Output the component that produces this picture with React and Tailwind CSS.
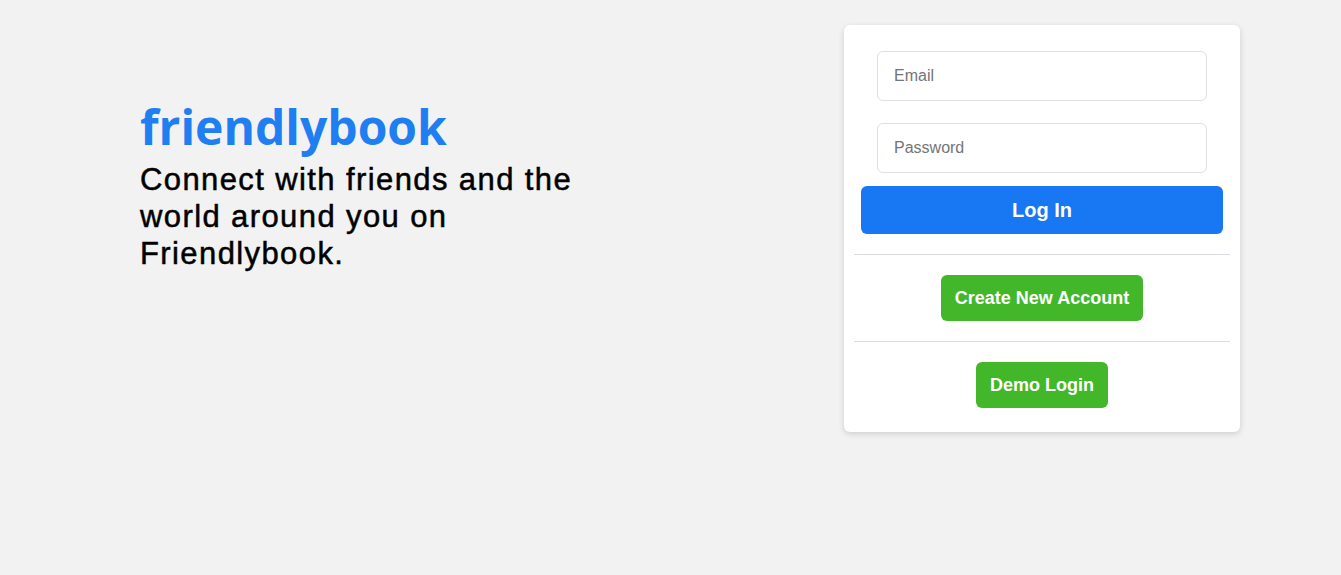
export default function App() {
  return (
    <div className="min-h-screen w-full bg-[#f2f2f2] font-['Liberation_Sans',Arial,sans-serif]">
      <div className="flex items-start justify-between pl-[140px] pr-[101px] pt-[25px]">
        <div className="mt-[72px] w-[480px]">
          <h1 className="font-['Open_Sans',sans-serif] text-[48px] font-bold leading-[60px] text-[#1f7ff0]">
            friendlybook
          </h1>
          <p className="mt-[4px] text-[31px] leading-[37px] tracking-[1.4px] text-black [-webkit-text-stroke:0.5px_black]">
            Connect with friends and the world around you on Friendlybook.
          </p>
        </div>

        <div className="w-[396px] rounded-md bg-white px-[10px] pt-[26px] pb-[24px] shadow-[0_2px_6px_rgba(0,0,0,0.15)]">
          <form className="flex flex-col px-[7px]" onSubmit={(e) => e.preventDefault()}>
            <input
              type="email"
              placeholder="Email"
              className="mx-[16px] h-[50px] rounded-md border border-[#dddfe2] px-[16px] text-[16px] text-black outline-none placeholder:text-[#757575]"
            />
            <input
              type="password"
              placeholder="Password"
              className="mx-[16px] mt-[22px] h-[50px] rounded-md border border-[#dddfe2] px-[16px] text-[16px] text-black outline-none placeholder:text-[#757575]"
            />
            <button className="mt-[13px] h-[48px] rounded-md bg-[#1877f2] text-[20px] font-bold text-white">
              Log In
            </button>
          </form>

          <div className="mt-[20px] border-t border-[#dadde1]" />
          <div className="flex justify-center pt-[20px] pb-[20px]">
            <button className="h-[46px] w-[202px] rounded-md bg-[#42b72a] text-[18px] font-bold text-white">
              Create New Account
            </button>
          </div>
          <div className="border-t border-[#dadde1]" />
          <div className="flex justify-center pt-[20px]">
            <button className="h-[46px] w-[132px] rounded-md bg-[#42b72a] text-[18px] font-bold text-white">
              Demo Login
            </button>
          </div>
        </div>
      </div>
    </div>
  );
}
